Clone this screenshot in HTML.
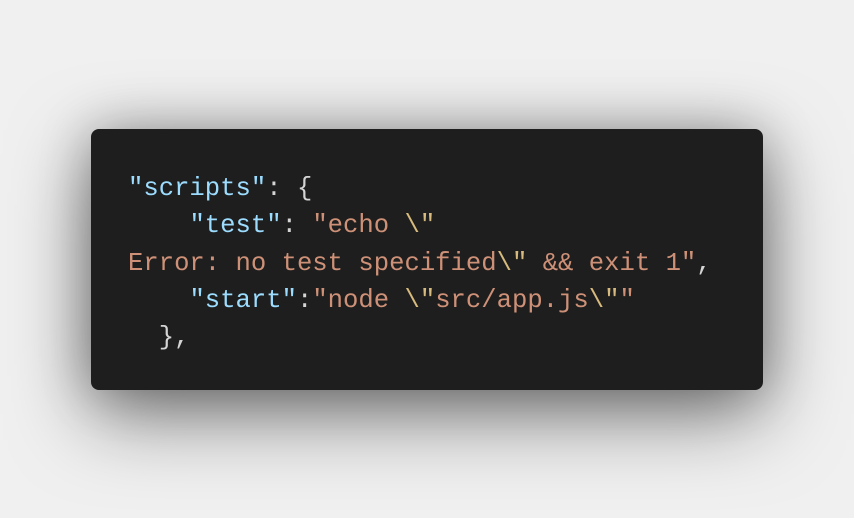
<!DOCTYPE html>
<html><head><meta charset="utf-8"><style>
html,body{margin:0;padding:0;width:854px;height:518px;background:#f0f0f0;overflow:hidden}
.card{position:absolute;left:91px;top:129px;width:672px;height:261px;background:#1e1e1e;border-radius:8px;box-shadow:0 25px 80px rgba(0,0,0,0.5),0 0 50px rgba(0,0,0,0.25)}
pre{position:absolute;left:128px;top:170px;margin:0;font-family:"Liberation Mono",monospace;font-size:25.6px;line-height:37.3px;color:#d4d4d4;white-space:pre}
.k{color:#9cdcfe}.s{color:#ce9178}.e{color:#d7ba7d}
</style></head><body>
<div class="card"></div>
<pre><span class="k">"scripts"</span>: {
    <span class="k">"test"</span>: <span class="s">"echo </span><span class="e">\"</span>
<span class="s">Error: no test specified</span><span class="e">\"</span><span class="s"> &amp;&amp; exit 1"</span>,
    <span class="k">"start"</span>:<span class="s">"node </span><span class="e">\"</span><span class="s">src/app.js</span><span class="e">\"</span><span class="s">"</span>
  },</pre>
</body></html>
